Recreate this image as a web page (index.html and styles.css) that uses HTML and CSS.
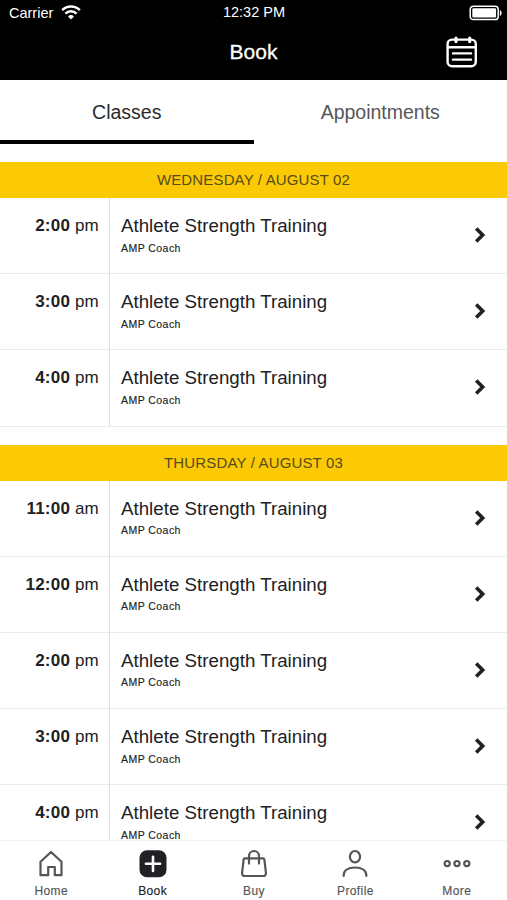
FILE: index.html
```html
<!DOCTYPE html>
<html lang="en">
<head>
<meta charset="utf-8">
<meta name="viewport" content="width=device-width, initial-scale=1">
<title>Book</title>
<link rel="stylesheet" href="styles.css">
</head>
<body>
<svg class="defs" width="0" height="0" aria-hidden="true">
  <symbol id="chevron" viewBox="0 0 12 18"><path d="M2.200 2.500 8.700 9 2.200 15.500"/></symbol>
</svg>
<div class="app">
  <header class="header">
    <div class="status">
      <div class="carrier">Carrier
        <svg class="wifi" width="20" height="15" viewBox="0 0 20 15"><path d="M1.200 5.200a12.600 12.600 0 0 1 17.600 0M4.400 8.600a8 8 0 0 1 11.200 0"/><path class="dot" d="m10 14.600-3-3.100a4.300 4.300 0 0 1 6 0z"/></svg>
      </div>
      <div class="clock">12:32 PM</div>
      <svg class="battery" width="34" height="16" viewBox="0 0 34 16"><rect class="case" x="1.200" y="1.200" width="28" height="13.400" rx="3.200"/><rect class="charge" x="3.300" y="3.200" width="23.800" height="9.400" rx="1.300"/><path class="charge" d="M30.800 5c2.400 1 2.400 5 0 6z"/></svg>
    </div>
    <div class="titlebar">
      <h1>Book</h1>
      <svg class="calendar" width="32" height="32" viewBox="0 0 32 32"><rect x="1.600" y="3.600" width="28.200" height="26.600" rx="4.500"/><path d="M2 11.300h27.500M7 17.400h18M7 23.600h18"/><path class="rings" d="M10 2.200v3.400M23.700 2.200v3.400"/></svg>
    </div>
  </header>
  <nav class="tabs">
    <div class="tab selected">Classes</div>
    <div class="tab">Appointments</div>
  </nav>
  <main class="schedule">
    <section>
      <h2>WEDNESDAY / AUGUST 02</h2>
      <div class="row"><div class="time"><b>2:00</b> pm</div><div class="info"><h3>Athlete Strength Training</h3><p>AMP Coach</p></div><svg class="chevron"><use href="#chevron"/></svg></div>
      <div class="row"><div class="time"><b>3:00</b> pm</div><div class="info"><h3>Athlete Strength Training</h3><p>AMP Coach</p></div><svg class="chevron"><use href="#chevron"/></svg></div>
      <div class="row"><div class="time"><b>4:00</b> pm</div><div class="info"><h3>Athlete Strength Training</h3><p>AMP Coach</p></div><svg class="chevron"><use href="#chevron"/></svg></div>
    </section>
    <section>
      <h2>THURSDAY / AUGUST 03</h2>
      <div class="row"><div class="time"><b>11:00</b> am</div><div class="info"><h3>Athlete Strength Training</h3><p>AMP Coach</p></div><svg class="chevron"><use href="#chevron"/></svg></div>
      <div class="row"><div class="time"><b>12:00</b> pm</div><div class="info"><h3>Athlete Strength Training</h3><p>AMP Coach</p></div><svg class="chevron"><use href="#chevron"/></svg></div>
      <div class="row"><div class="time"><b>2:00</b> pm</div><div class="info"><h3>Athlete Strength Training</h3><p>AMP Coach</p></div><svg class="chevron"><use href="#chevron"/></svg></div>
      <div class="row"><div class="time"><b>3:00</b> pm</div><div class="info"><h3>Athlete Strength Training</h3><p>AMP Coach</p></div><svg class="chevron"><use href="#chevron"/></svg></div>
      <div class="row"><div class="time"><b>4:00</b> pm</div><div class="info"><h3>Athlete Strength Training</h3><p>AMP Coach</p></div><svg class="chevron"><use href="#chevron"/></svg></div>
    </section>
  </main>
  <nav class="bottom">
    <div class="item"><svg viewBox="0 0 30 30"><path d="M4.500 26.200V12.800L15 3l10.500 9.800v13.400h-6.700v-8.200h-6.600v8.200z"/></svg><span>Home</span></div>
    <div class="item active"><svg viewBox="0 0 30 30"><rect class="tile" x="1.500" y="1.200" width="27" height="27" rx="7.500"/><path class="plus" d="M15 7.700v14.200M7.900 14.800h14.200"/></svg><span>Book</span></div>
    <div class="item"><svg viewBox="0 0 30 30"><path d="M6 9.400h18q1.200 0 1.400 1.200l1.500 13q.3 3.400-3 3.400H6.100q-3.300 0-3-3.400l1.500-13q.2-1.200 1.400-1.200zM10 14.600V7.200a5 5.200 0 0 1 10 0v7.400"/></svg><span>Buy</span></div>
    <div class="item"><svg viewBox="0 0 30 30"><ellipse cx="15" cy="7.700" rx="5.100" ry="5.700"/><path d="M3.700 27v-.8c0-4.600 4.300-7.700 11.300-7.700s11.300 3.100 11.300 7.700v.8"/></svg><span>Profile</span></div>
    <div class="item"><svg viewBox="0 0 30 30"><circle cx="5.200" cy="14.600" r="2.600"/><circle cx="15" cy="14.600" r="2.600"/><circle cx="24.800" cy="14.600" r="2.600"/></svg><span>More</span></div>
  </nav>
</div>
</body>
</html>
```
FILE: styles.css
```css
* { box-sizing: border-box; margin: 0; padding: 0; }
body { font-family: "Liberation Sans", Arial, sans-serif; background: #fff; color: #202124; }
svg { fill: none; stroke: currentColor; stroke-linecap: round; stroke-linejoin: round; flex: none; }
.defs { display: none; }
.app { display: flex; flex-direction: column; height: 900px; overflow: hidden; }

.header { height: 80px; flex: none; background: #000; color: #fff; }
.status { display: grid; grid-template-columns: 1fr auto 1fr; align-items: center; height: 24px; padding: 1px 4px 0 9px; font-size: 14.5px; line-height: 22px; }
.carrier { display: flex; align-items: center; gap: 8px; }
.clock { transform: translate(-2px, -1px); }
.wifi { stroke-width: 2.5; stroke-linecap: butt; }
.wifi .dot { fill: #fff; stroke: none; }
.battery { justify-self: end; }
.battery .case { stroke-width: 1.5; }
.battery .charge { fill: #fff; stroke: none; }
.titlebar { display: grid; grid-template-columns: 1fr auto 1fr; height: 56px; align-items: center; padding-right: 29px; padding-left: 29px; }
.titlebar h1 { grid-column: 2; font-size: 21px; font-weight: 400; line-height: 56px; -webkit-text-stroke: .3px; }
.calendar { justify-self: end; stroke-width: 2.4; }
.calendar .rings { stroke-width: 3.2; }

.tabs { display: flex; flex: none; height: 64px; }
.tab { flex: 1; height: 64px; line-height: 64px; text-align: center; font-size: 19.5px; color: #56575a; border-bottom: 4px solid transparent; }
.tab.selected { color: #2a2b2e; border-bottom-color: #000; }

.schedule { flex: 1; min-height: 0; overflow: hidden; padding-top: 18px; }
section { margin-bottom: 18px; }
h2 { height: 36px; background: #fbca04; color: #584b1c; font-size: 15px; font-weight: 400; line-height: 36px; text-align: center; letter-spacing: .15px; }
.row { display: flex; height: 76.2px; border-bottom: 1px solid #e9ebec; }
.time { width: 110px; border-right: 1px solid #dcdfe2; padding: 17px 10px 0 0; text-align: right; font-size: 17px; line-height: 22px; letter-spacing: .2px; white-space: nowrap; }
.info { flex: 1; padding: 17px 0 0 11px; }
h3 { font-size: 18.7px; font-weight: 400; line-height: 22px; letter-spacing: .02px; white-space: nowrap; }
.info p { font-size: 10.5px; line-height: 14px; margin-top: 3.5px; letter-spacing: .45px; -webkit-text-stroke: .15px; }
.chevron { width: 12px; height: 18px; margin: 28px 21px 0 0; stroke-width: 3.6; stroke-linecap: butt; stroke-linejoin: miter; }

.bottom { display: flex; flex: none; height: 60px; background: #fff; border-top: 1px solid #f1f2f3; }
.item { flex: 1; display: flex; flex-direction: column; align-items: center; color: #535558; font-size: 12px; letter-spacing: .4px; line-height: 14px; -webkit-text-stroke: .15px; }
.item svg { width: 30px; height: 30px; margin: 8px 0 5px 1px; stroke-width: 2.2; }
.item span { padding-left: 1px; }
.item.active { color: #202124; }
.item .tile { fill: #202124; stroke: none; }
.item .plus { stroke: #fff; stroke-width: 2.6; }
```
